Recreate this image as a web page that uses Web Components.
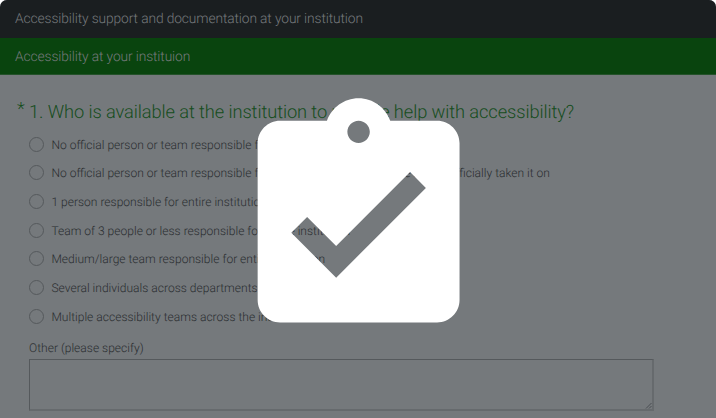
<!DOCTYPE html>
<html lang="en"><head><meta charset="utf-8"><title>Accessibility survey</title>
<style>html{background:#fff}body{margin:0;overflow:hidden}</style></head>
<body>
<survey-page>
  <survey-bar>Accessibility support and documentation at your institution</survey-bar>
  <survey-bar class="section">Accessibility at your instituion</survey-bar>
  <survey-question>
    <span slot="title">1. Who is available at the institution to provide help with accessibility?</span>
    <survey-option>No official person or team responsible for accessibility</survey-option>
    <survey-option>No official person or team responsible for accessibility, but someone has unofficially taken it on</survey-option>
    <survey-option>1 person responsible for entire institution</survey-option>
    <survey-option>Team of 3 people or less responsible for entire institution</survey-option>
    <survey-option>Medium/large team responsible for entire institution</survey-option>
    <survey-option>Several individuals across departments</survey-option>
    <survey-option>Multiple accessibility teams across the institution</survey-option>
    <survey-other slot="other">Other (please specify)</survey-other>
  </survey-question>
  <clipboard-badge slot="overlay"></clipboard-badge>
</survey-page>
<script>
const define = (name, markup) => customElements.define(name, class extends HTMLElement {
  constructor() {
    super();
    this.attachShadow({ mode: 'open' }).innerHTML = markup;
  }
});
define('survey-page', `<style>
:host{display:block;position:relative;box-sizing:border-box;width:716px;height:418px;overflow:hidden;background:#75797c;border-radius:7px 7px 0 0;font-family:Roboto,sans-serif;font-weight:300;color:#2a2d30;text-rendering:geometricPrecision}
</style><slot></slot><slot name="overlay"></slot>`);
define('survey-bar', `<style>
:host{display:flex;align-items:center;box-sizing:border-box;height:38px;padding:0 15px;background:#1a1e20;color:#75797c;font-size:13.8px;letter-spacing:-.12px;line-height:20px;white-space:nowrap}
:host(.section){height:37px;background:#09440e;border-bottom:1px solid #24522a;padding-top:2px}
</style><slot></slot>`);
define('survey-question', `<style>
:host{display:block;padding:25px 0 0 17px}
h2{display:flex;margin:0;height:24px;font-size:18.3px;letter-spacing:-.1px;line-height:26px;font-weight:300;color:#164d1c;white-space:nowrap}
.star{width:12px;line-height:20px}
.body{padding:6px 0 0 12px}
</style><h2><span class="star">*</span><slot name="title"></slot></h2><div class="body"><slot></slot><slot name="other"></slot></div>`);
define('survey-option', `<style>
:host{display:flex;align-items:center;height:28.67px;gap:7.4px;font-size:12.06px;line-height:16px;white-space:nowrap}
i{box-sizing:border-box;width:15px;height:15px;border:1px solid #55595c;border-radius:50%}
span{padding-top:1px}
</style><i></i><span><slot></slot></span>`);
define('survey-other', `<style>
:host{display:block;font-size:12.06px;line-height:16px;padding-top:9px}
.box{box-sizing:border-box;width:625px;height:52px;margin-top:3px;border:1px solid #55595c;border-right:2px solid #666a6d;border-bottom:2px solid #666a6d;display:flex;align-items:flex-end;justify-content:flex-end}
svg{display:block;width:7px;height:7px}
</style><slot></slot><div class="box"><svg viewBox="0 0 7 7"><path d="M1 6.5 6.5 1M4 6.5 6.5 4" stroke="#4b4f52" fill="none"/></svg></div>`);
define('clipboard-badge', `<style>
:host{display:block;position:absolute;left:224.4px;top:86.6px;width:269.2px;height:269.2px}
svg{display:block;width:100%;height:100%}
</style><svg viewBox="0 0 24 24" fill="#fff"><path d="M19 3h-4.18C14.4 1.84 13.3 1 12 1c-1.3 0-2.4.84-2.82 2H5c-1.1 0-2 .9-2 2v14c0 1.1.9 2 2 2h14c1.1 0 2-.9 2-2V5c0-1.1-.9-2-2-2zm-7 0c.55 0 1 .45 1 1s-.45 1-1 1-1-.45-1-1 .45-1 1-1zm-2 14l-4-4 1.41-1.41L10 14.17l6.59-6.59L18 9l-8 8z"/></svg>`);
</script>
</body></html>
